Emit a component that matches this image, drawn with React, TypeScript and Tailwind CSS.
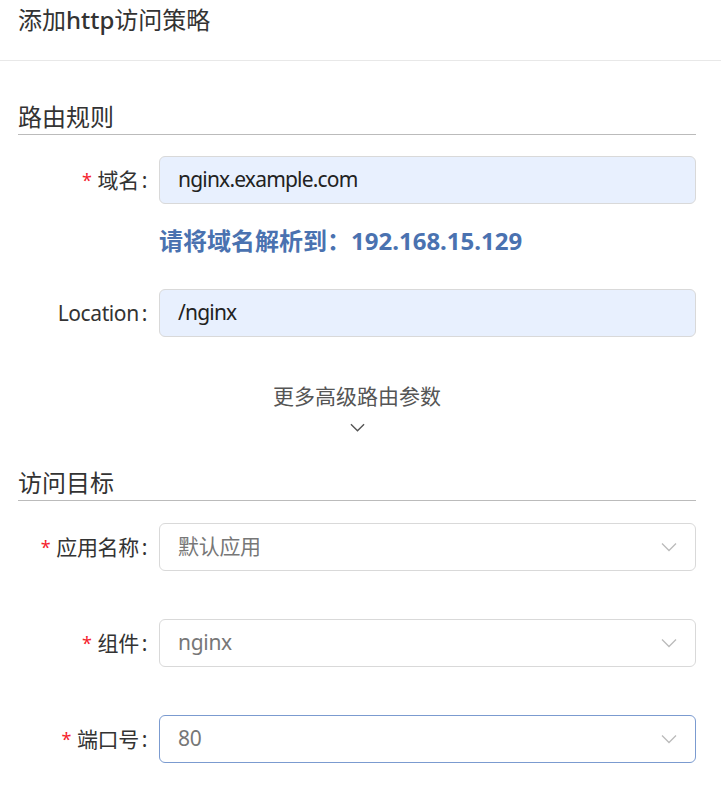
import React from "react";

const FONT = '"Noto Sans", "Noto Sans CJK SC", sans-serif';

function Chevron({ className, w = 16, h = 10, sw = 1.3 }: { className?: string; w?: number; h?: number; sw?: number }) {
  return (
    <svg width={w} height={h} viewBox="0 0 16 10" className={className} fill="none">
      <path d="M1 1.5 L8 8.5 L15 1.5" stroke="currentColor" strokeWidth={sw} />
    </svg>
  );
}

function Label({ text, required }: { text: string; required?: boolean }) {
  return (
    <div className="w-[159px] shrink-0 flex justify-end items-center pr-[12px] text-[21px] leading-[48px] text-[#333] tracking-[-0.4px]">
      {required && <span className="text-[#f5222d] mr-[6px] text-[18px]">*</span>}
      <span>{text}</span>
      <span className="ml-[3px]">:</span>
    </div>
  );
}

function Input({ value }: { value: string }) {
  return (
    <div className="flex-1 h-[48px] rounded-[6px] border border-[#d9d9d9] bg-[#e8f0fe] flex items-center pl-[18px] text-[21px] text-[#222] tracking-[-0.8px]">
      {value}
    </div>
  );
}

function Select({ value, focused }: { value: string; focused?: boolean }) {
  return (
    <div
      className={
        "flex-1 h-[48px] rounded-[6px] border bg-white flex items-center justify-between pl-[18px] pr-[18px] text-[21px] text-[#777] tracking-[-0.3px] " +
        (focused ? "border-[#7b9bd0]" : "border-[#d9d9d9]")
      }
    >
      <span>{value}</span>
      <Chevron className="text-[#bbb]" />
    </div>
  );
}

function SectionTitle({ text }: { text: string }) {
  return (
    <div className="border-b border-[#bbb] text-[24px] leading-[34px] text-[#333]">{text}</div>
  );
}

export default function App() {
  return (
    <div className="w-[721px] h-[793px] bg-white overflow-hidden" style={{ fontFamily: FONT }}>
      <div className="h-[61px] border-b border-[#e8e8e8] pl-[18px] pt-[2px] text-[24px] leading-[36px] text-[#333]">
        添加<span className="font-medium">http</span>访问策略
      </div>
      <div className="pl-[18px] pr-[25px]">
        <div className="mt-[39px]">
          <SectionTitle text="路由规则" />
        </div>
        <div className="flex mt-[21px] ml-[-18px]">
          <Label text="域名" required />
          <Input value="nginx.example.com" />
        </div>
        <div className="ml-[141px] mt-[19px] text-[24px] leading-[36px] font-bold text-[#4a72b0]">
          请将域名解析到：192.168.15.129
        </div>
        <div className="flex mt-[30px] ml-[-18px]">
          <Label text="Location" />
          <Input value="/nginx" />
        </div>
        <div className="flex flex-col items-center mt-[44px] text-[#555]">
          <div className="text-[21px] leading-[30px]">更多高级路由参数</div>
          <Chevron className="mt-[11px] text-[#555]" w={15} h={11} sw={1.5} />
        </div>
        <div className="mt-[33px]">
          <SectionTitle text="访问目标" />
        </div>
        <div className="flex mt-[22px] ml-[-18px]">
          <Label text="应用名称" required />
          <Select value="默认应用" />
        </div>
        <div className="flex mt-[48px] ml-[-18px]">
          <Label text="组件" required />
          <Select value="nginx" />
        </div>
        <div className="flex mt-[48px] ml-[-18px]">
          <Label text="端口号" required />
          <Select value="80" focused />
        </div>
      </div>
    </div>
  );
}
